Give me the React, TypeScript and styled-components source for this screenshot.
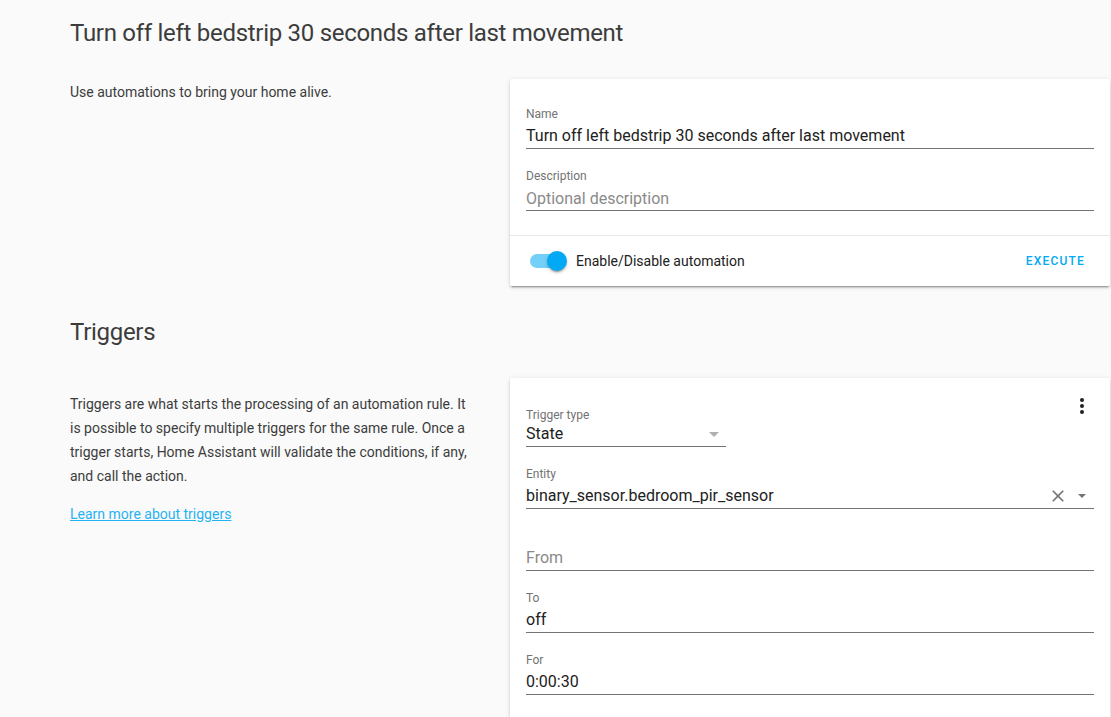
import React from 'react';
import styled, { createGlobalStyle } from 'styled-components';

const primaryText = '#212121';
const secondaryText = '#737373';
const accent = '#03a9f4';

const GlobalStyle = createGlobalStyle`
  html, body {
    margin: 0;
    padding: 0;
    overflow: hidden;
    background: #fafafa;
    font-family: Roboto, "Liberation Sans", sans-serif;
    -webkit-font-smoothing: antialiased;
  }
`;

// page column, left aligned like the config panel
const Page = styled.div`
  width: 1040px;
  margin-left: 70px;
  padding-top: 17px;
`;

// one config section: header + intro/cards row
const Section = styled.section<{ $top?: number }>`
  margin-top: ${(p) => p.$top ?? 0}px;
`;

const Header = styled.h1`
  margin: 0 0 30px;
  font-size: 24px;
  font-weight: 400;
  line-height: 32px;
  letter-spacing: -0.012em;
  color: ${primaryText};
  opacity: 0.87;
`;

const Row = styled.div`
  display: flex;
  gap: 40px;
  align-items: flex-start;
`;

const Intro = styled.div`
  flex: 0 0 400px;
  padding-top: 1px;
  font-size: 14px;
  line-height: 24px;
  color: ${primaryText};
  opacity: 0.87;
  & p {
    margin: 13px 0 14px;
  }
`;

const LearnLink = styled.a`
  color: ${accent};
  text-decoration: underline;
`;

const Card = styled.div`
  position: relative;
  flex: 0 0 600px;
  background: #fff;
  border-radius: 2px;
  box-shadow: 0 2px 2px 0 rgba(0, 0, 0, 0.14), 0 1px 5px 0 rgba(0, 0, 0, 0.12),
    0 3px 1px -2px rgba(0, 0, 0, 0.2);
`;

const CardContent = styled.div<{ $top?: number }>`
  padding: ${(p) => p.$top ?? 16}px 16px 16px;
`;

const CardActions = styled.div`
  display: flex;
  align-items: center;
  height: 50px;
  padding: 0 18px 0 20px;
  border-top: 1px solid #e8e8e8;
`;

// text field: floating label, value line, underline
const Field = styled.div<{ $width?: number }>`
  padding: 9px 0 8px;
  width: ${(p) => (p.$width ? `${p.$width}px` : '100%')};
`;

const Label = styled.div<{ $low?: boolean }>`
  height: 20px;
  font-size: 12px;
  line-height: ${(p) => (p.$low ? 26 : 21)}px;
  color: ${secondaryText};
  overflow: visible;
`;

const InputLine = styled.div<{ $placeholder?: boolean }>`
  display: flex;
  align-items: center;
  height: 24px;
  border-bottom: 1px solid ${secondaryText};
  font-size: 16px;
  line-height: 24px;
  color: ${(p) => (p.$placeholder ? '#8a8a8a' : primaryText)};
`;

const Value = styled.span<{ $placeholder?: boolean }>`
  flex: 1;
  white-space: nowrap;
  overflow: hidden;
  padding-top: ${(p) => (p.$placeholder ? 2 : 0)}px;
`;

const Caret = styled.span<{ $size: number; $color: string; $gap: number }>`
  width: 0;
  height: 0;
  margin: 0 ${(p) => p.$gap}px 0 8px;
  border-left: ${(p) => p.$size}px solid transparent;
  border-right: ${(p) => p.$size}px solid transparent;
  border-top: ${(p) => p.$size}px solid ${(p) => p.$color};
`;

const ClearIcon = styled.svg`
  width: 20px;
  height: 20px;
  fill: #757575;
  margin-right: 2px;
`;

const MenuButton = styled.button`
  position: absolute;
  top: 4px;
  right: 4px;
  width: 48px;
  height: 48px;
  border: 0;
  padding: 12px;
  background: none;
  & svg {
    width: 24px;
    height: 24px;
    fill: ${primaryText};
  }
`;

// toggle switch
const Switch = styled.div`
  position: relative;
  width: 36px;
  height: 14px;
  border-radius: 7px;
  background: rgba(3, 169, 244, 0.55);
  flex: none;
`;

const Knob = styled.div`
  position: absolute;
  top: -3px;
  right: -1px;
  width: 20px;
  height: 20px;
  border-radius: 50%;
  background: ${accent};
  box-shadow: 0 2px 2px 0 rgba(0, 0, 0, 0.14), 0 1px 5px 0 rgba(0, 0, 0, 0.12),
    0 3px 1px -2px rgba(0, 0, 0, 0.2);
`;

const SwitchLabel = styled.span`
  margin-left: 10px;
  flex: 1;
  font-size: 14px;
  color: ${primaryText};
`;

const TextButton = styled.button`
  border: 0;
  background: none;
  padding: 0 7px 0 8px;
  height: 36px;
  font-family: Roboto, sans-serif;
  font-size: 12px;
  font-weight: 500;
  letter-spacing: 0.1em;
  text-transform: uppercase;
  color: ${accent};
`;

function TextField({
  label,
  value,
  placeholder,
  width,
  lowLabel,
  children,
}: {
  label?: string;
  value?: string;
  placeholder?: string;
  width?: number;
  lowLabel?: boolean;
  children?: React.ReactNode;
}) {
  return (
    <Field $width={width}>
      <Label $low={lowLabel}>{label}</Label>
      <InputLine $placeholder={!value}>
        <Value $placeholder={!value && !!label}>{value || placeholder}</Value>
        {children}
      </InputLine>
    </Field>
  );
}

export default function App() {
  return (
    <>
      <GlobalStyle />
      <Page>
        <Section>
          <Header>Turn off left bedstrip 30 seconds after last movement</Header>
          <Row>
            <Intro>Use automations to bring your home alive.</Intro>
            <Card>
              <CardContent>
                <TextField
                  label="Name"
                  value="Turn off left bedstrip 30 seconds after last movement"
                />
                <TextField label="Description" placeholder="Optional description" />
              </CardContent>
              <CardActions>
                <Switch>
                  <Knob />
                </Switch>
                <SwitchLabel>Enable/Disable automation</SwitchLabel>
                <TextButton>Execute</TextButton>
              </CardActions>
            </Card>
          </Row>
        </Section>

        <Section $top={30}>
          <Header>Triggers</Header>
          <Row>
            <Intro>
              <p>
                Triggers are what starts the processing of an automation rule. It
                is possible to specify multiple triggers for the same rule. Once a
                trigger starts, Home Assistant will validate the conditions, if
                any, and call the action.
              </p>
              <LearnLink href="#">Learn more about triggers</LearnLink>
            </Intro>
            <Card>
              <MenuButton aria-label="menu">
                <svg viewBox="0 0 24 24">
                  <path d="M12 16a2 2 0 0 1 2 2 2 2 0 0 1-2 2 2 2 0 0 1-2-2 2 2 0 0 1 2-2m0-6a2 2 0 0 1 2 2 2 2 0 0 1-2 2 2 2 0 0 1-2-2 2 2 0 0 1 2-2m0-6a2 2 0 0 1 2 2 2 2 0 0 1-2 2 2 2 0 0 1-2-2 2 2 0 0 1 2-2z" />
                </svg>
              </MenuButton>
              <CardContent $top={15}>
                <TextField label="Trigger type" value="State" width={200} lowLabel>
                  <Caret $size={5} $color="#b0b0b0" $gap={7} />
                </TextField>
                <TextField label="Entity" value="binary_sensor.bedroom_pir_sensor">
                  <ClearIcon viewBox="0 0 24 24">
                    <path d="M19 6.41 17.59 5 12 10.59 6.41 5 5 6.41 10.59 12 5 17.59 6.41 19 12 13.41 17.59 19 19 17.59 13.41 12z" />
                  </ClearIcon>
                  <Caret $size={4} $color="#757575" $gap={8} />
                </TextField>
                <TextField placeholder="From" />
                <TextField label="To" value="off" />
                <TextField label="For" value="0:00:30" />
              </CardContent>
            </Card>
          </Row>
        </Section>
      </Page>
    </>
  );
}
